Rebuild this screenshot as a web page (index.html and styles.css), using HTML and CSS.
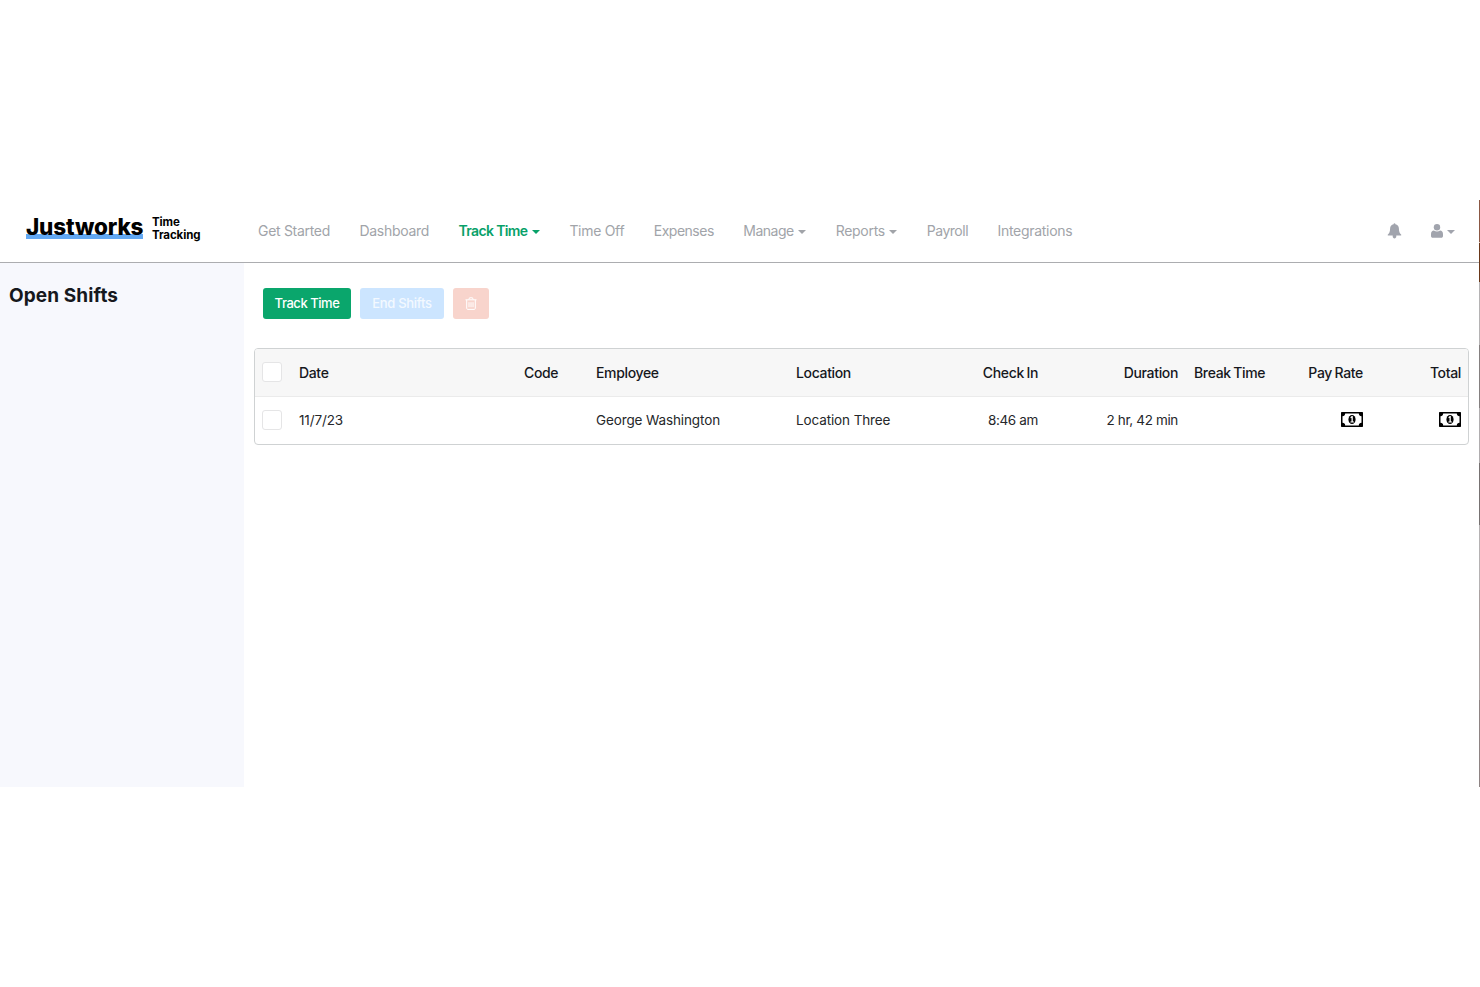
FILE: index.html
```html
<!DOCTYPE html>
<html lang="en">
<head>
    <meta charset="UTF-8">
    <meta name="viewport" content="width=device-width, initial-scale=1.0">
    <title>Open Shifts</title>
    <link rel="stylesheet" href="styles.css">
</head>
<body>
    <div class="app">
        <div class="screen">
            <header class="topbar">
                <a class="brand">
                    <span class="brand-name">Justworks</span>
                    <span class="brand-product">Time<br>Tracking</span>
                </a>
                <nav class="nav">
                    <a>Get Started</a>
                    <a>Dashboard</a>
                    <a class="active">Track Time<i class="caret"></i></a>
                    <a>Time Off</a>
                    <a class="tight">Expenses</a>
                    <a class="tight">Manage<i class="caret"></i></a>
                    <a>Reports<i class="caret"></i></a>
                    <a class="tight">Payroll</a>
                    <a>Integrations</a>
                </nav>
                <div class="account">
                    <svg class="bell" viewBox="0 0 14 16"><path d="M7 0.3c.6 0 .9.4.9.9 2.2.5 3.5 2.1 3.5 4.4 0 3.2.8 4.7 2.2 5.8.4.4.2 1.2-.5 1.2H.9c-.7 0-.9-.8-.5-1.2 1.4-1.1 2.2-2.6 2.2-5.8 0-2.3 1.3-3.9 3.5-4.4 0-.5.3-.9.9-.9zM5.2 12.5h3.6v1c0 1.1-.8 1.9-1.8 1.9s-1.8-.8-1.8-1.9z"/></svg>
                    <span class="user">
                        <svg viewBox="0 0 12 14"><circle cx="6" cy="3.3" r="3.2"/><path d="M2.9 6.5C4.8 7.9 7.2 7.9 9.1 6.5 10.8 6.5 12 8 12 10v2c0 1.1-.7 1.8-1.8 1.8H1.8C.7 13.8 0 13.1 0 12v-2c0-2 1.2-3.5 2.9-3.5z"/></svg>
                        <i class="caret"></i>
                    </span>
                </div>
            </header>
            <div class="body">
                <aside class="sidebar">
                    <h1>Open Shifts</h1>
                </aside>
                <main class="content">
                    <div class="actions">
                        <button class="btn btn-track">Track Time</button>
                        <button class="btn btn-end">End Shifts</button>
                        <button class="btn btn-delete" aria-label="Delete">
                            <svg viewBox="0 0 12 13"><path d="M.5 2.8h11M3.8 2.6l.7-1.8h3l.7 1.8M1.7 3v8.3c0 .7.4 1.1 1.1 1.1h6.4c.7 0 1.1-.4 1.1-1.1V3M4 5.2v5M6 5.2v5M8 5.2v5"/></svg>
                        </button>
                    </div>
                    <div class="table-box">
                        <table class="shifts">
                            <colgroup>
                                <col class="c-check"><col class="c-date"><col class="c-code"><col class="c-employee"><col class="c-location">
                                <col class="c-in"><col class="c-duration"><col class="c-break"><col class="c-rate"><col class="c-total">
                            </colgroup>
                            <thead>
                                <tr>
                                    <th><span class="checkbox"></span></th>
                                    <th>Date</th>
                                    <th>Code</th>
                                    <th>Employee</th>
                                    <th>Location</th>
                                    <th class="num">Check In</th>
                                    <th class="num">Duration</th>
                                    <th>Break Time</th>
                                    <th class="num">Pay Rate</th>
                                    <th class="num">Total</th>
                                </tr>
                            </thead>
                            <tbody>
                                <tr>
                                    <td><span class="checkbox"></span></td>
                                    <td>11/7/23</td>
                                    <td></td>
                                    <td>George Washington</td>
                                    <td>Location Three</td>
                                    <td class="num">8:46 am</td>
                                    <td class="num">2 hr, 42 min</td>
                                    <td></td>
                                    <td class="num"><svg class="money"><use href="#money"/></svg></td>
                                    <td class="num"><svg class="money"><use href="#money"/></svg></td>
                                </tr>
                            </tbody>
                        </table>
                    </div>
                </main>
            </div>
        </div>
        <div class="edge"></div>
    </div>

    <svg class="symbols">
        <symbol id="money" viewBox="0 0 22 15">
            <path fill-rule="evenodd" d="M.7 0h20.6q.7 0 .7.7v13.6q0 .7-.7.7H.7q-.7 0-.7-.7V.7Q0 0 .7 0zM4.2 1.6c0 1.6-1.1 2.7-2.7 2.7v6.4c1.6 0 2.7 1.1 2.7 2.7h13.6c0-1.6 1.1-2.7 2.7-2.7V4.3c-1.6 0-2.7-1.1-2.7-2.7z"/>
            <ellipse cx="11" cy="7.5" rx="3.6" ry="4.6"/>
            <path fill="#fff" d="M9.4 5.2l1.4-1.1h1v5.4h1.1v1.1H9.4V9.5h1.1V5.8l-.7.4z"/>
        </symbol>
    </svg>
</body>
</html>
```
FILE: styles.css
```css
* {
    box-sizing: border-box;
}
body {
    margin: 0;
    background: #fff;
    color: #16181d;
    font-family: Inter, "Liberation Sans", sans-serif;
    font-size: 14px;
}
.app {
    display: flex;
    height: 587px;
    margin-top: 200px;
}
.screen {
    flex: 1;
    display: flex;
    flex-direction: column;
}
.edge {
    width: 1px;
    background: linear-gradient(#8b5844 0 42px, #dcc8be 42px 43px, #693719 43px 82px, #b5b3b4 82px 145px, #858080 145px 208px, #b0adaf 208px 263px, #777272 263px 325px, #b5b2b3 325px 390px, #aaa1a1 390px 500px, #8e8484 500px);
}

/* top bar */
.topbar {
    display: flex;
    align-items: center;
    height: 63px;
    padding: 0 24px 1px 26px;
    border-bottom: 1px solid #acadb0;
}
.brand {
    display: flex;
    width: 232px;
    margin-top: -3px;
    color: #000;
    font-weight: 700;
}
.brand-name {
    width: 117px;
    height: 24px;
    margin-right: 9px;
    font-size: 22.5px;
    font-weight: 800;
    line-height: 22px;
    letter-spacing: -0.15px;
    white-space: nowrap;
    background: linear-gradient(#62a8f3, #62a8f3) 0 18px / 117px 5px no-repeat;
}
.brand-product {
    font-size: 11.5px;
    line-height: 13px;
    letter-spacing: -0.1px;
}
.nav {
    display: flex;
    gap: 29.5px;
    color: #a1a4a9;
    white-space: nowrap;
}
.nav a {
    display: flex;
    align-items: center;
    letter-spacing: -0.3px;
}
.nav .tight {
    letter-spacing: -0.5px;
}
.nav .active {
    color: #08a169;
    font-weight: 600;
    letter-spacing: -0.65px;
}
.caret {
    width: 0;
    margin: 2px 0 0 4.5px;
    border: 4px solid transparent;
    border-top: 4px solid;
    border-bottom: 0;
}
.account {
    display: flex;
    align-items: center;
    gap: 29px;
    margin-left: auto;
    color: #a1a4ad;
    fill: #a1a4ad;
}
.bell {
    width: 15px;
    height: 16px;
}
.user {
    display: flex;
    align-items: center;
}
.user svg {
    width: 12px;
    height: 14px;
}

/* page */
.body {
    flex: 1;
    display: flex;
}
.sidebar {
    width: 244px;
    padding: 20px 9px;
    background: #f7f8fd;
}
.sidebar h1 {
    margin: 0;
    font-size: 19px;
    font-weight: 700;
    line-height: 26px;
    letter-spacing: 0.1px;
}
.content {
    flex: 1;
    padding: 25px 10px 0;
}
.actions {
    display: flex;
    gap: 9px;
    padding-left: 9px;
    margin-bottom: 29px;
}
.btn {
    display: flex;
    align-items: center;
    justify-content: center;
    height: 31px;
    padding: 0 0 1px;
    border: 0;
    border-radius: 3px;
    color: #fff;
    font-family: inherit;
    font-size: 13px;
    font-weight: 500;
}
.btn-track {
    width: 88px;
    background: #0aa66c;
    letter-spacing: -0.45px;
}
.btn-end {
    width: 84px;
    background: #cce5ff;
    color: #f3f9ff;
    letter-spacing: -0.3px;
}
.btn-delete {
    width: 36px;
    background: #f8d4cc;
}
.btn-delete svg {
    width: 12px;
    height: 13px;
    fill: none;
    stroke: #fff;
}

/* shifts table */
.table-box {
    height: 97px;
    border: 1px solid #cfd2d3;
    border-radius: 4px;
    overflow: hidden;
}
.shifts {
    width: 100%;
    table-layout: fixed;
    border-collapse: separate;
    border-spacing: 0;
}
.shifts th,
.shifts td {
    height: 48px;
    padding: 0 8px;
    text-align: left;
    white-space: nowrap;
}
.shifts th {
    background: #f7f7f7;
    border-bottom: 1px solid #ebebeb;
    font-weight: 500;
    letter-spacing: -0.35px;
    word-spacing: -0.8px;
}
.shifts td {
    height: 47px;
    padding-bottom: 2px;
    color: #25272a;
    font-size: 13.5px;
    letter-spacing: -0.12px;
}
.shifts .num {
    text-align: right;
}
.shifts td.num {
    letter-spacing: -0.35px;
}
.shifts th:first-child,
.shifts td:first-child {
    padding: 0 7px 2px;
}
.shifts .num:last-child {
    padding-right: 7px;
}
.c-check { width: 36px; }
.c-date { width: 225px; }
.c-code { width: 72px; }
.c-employee { width: 200px; }
.c-location { width: 150px; }
.c-in { width: 108px; }
.c-duration { width: 140px; }
.c-break { width: 90px; }
.c-rate { width: 95px; }
.checkbox {
    display: block;
    width: 20px;
    height: 20px;
    border: 1px solid #e5e5e6;
    border-radius: 3px;
    background: #fff;
}
.money {
    display: block;
    width: 22px;
    height: 15px;
    margin-left: auto;
}
.symbols {
    display: none;
}
```
